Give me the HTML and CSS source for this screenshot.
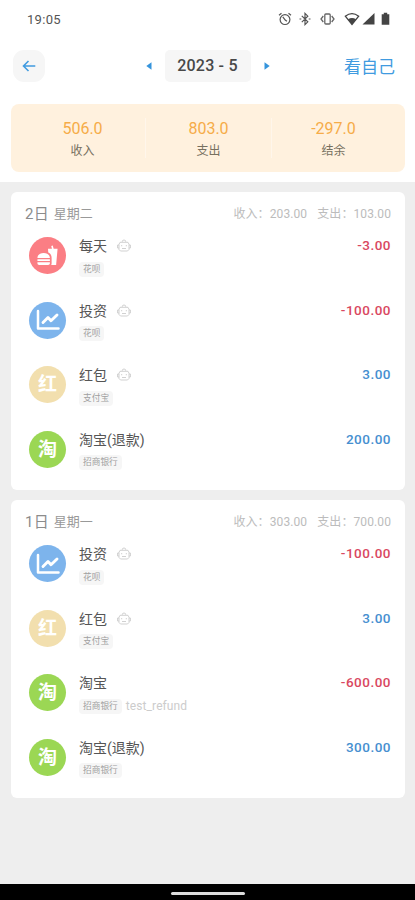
FILE: index.html
```html
<!DOCTYPE html>
<html lang="zh-CN">
<head>
<meta charset="utf-8">
<title>2023 - 5</title>
<link rel="stylesheet" href="styles.css">
</head>
<body>
<svg class="defs" width="0" height="0">
  <symbol id="bot" viewBox="0 0 14 14"><g fill="none" stroke="currentColor" stroke-width=".9"><path d="M5.200 2.800a1.800 1.800 0 0 1 3.600 0M3 3.300h8l1 2v5.200L10.500 12h-7L2 10.500V5.300zM2 6H.6v3H2M12 6h1.400v3H12M5 9.500h4"/><path d="M4.700 6v1.300M9.300 6v1.300"/></g></symbol>
  <symbol id="chart" viewBox="0 0 24 24"><g fill="none" stroke="currentColor" stroke-width="2.500" stroke-linecap="round" stroke-linejoin="round"><path d="M2 3v17.500h20.500"/><path d="M7 14.500l5-5 3 3.200 6-5.700" stroke-width="2.900"/></g></symbol>
  <symbol id="food" viewBox="0 0 24 24"><g fill="currentColor"><path d="M1.500 14.500c0-3.200 3-5 6.500-5s6.500 1.800 6.500 5zM1.500 15.800h13v1.900h-13zM1.500 19h13v1.200c0 1-.8 1.800-1.800 1.800h-9.400c-1 0-1.800-.8-1.800-1.800zM12.500 5h4.100l-.7-3 1.600-.5.9 3.500h4.100l-1.500 17h-5.200c.4-.5.500-1.200.5-2v-5.500c0-3-1.500-4.800-3.500-5.600z"/></g></symbol>
</svg>
<header class="top">
  <div class="status">
    <span class="clock">19:05</span>
    <div class="status-icons">
      <svg width="14" height="14" viewBox="0 0 14 14" fill="none" stroke="#555" stroke-width="1.200"><circle cx="7" cy="7.600" r="4.900"/><path d="M1 3.300l2.500-2M13 3.300l-2.500-2M4.800 4.800l2.400 3.200 1.700 1.300"/></svg>
      <svg class="bt" width="12" height="14" viewBox="0 0 12 14" fill="none" stroke="#555" stroke-width="1.200"><path d="M2.800 3.800l6 6L6 12.600V1.400l2.800 2.800-6 6M.5 7h1.800M9.700 7h1.800"/></svg>
      <svg class="vib" width="15" height="14" viewBox="0 0 15 14" fill="none" stroke="#666" stroke-width="1.300"><rect x="4.800" y="2" width="5.400" height="10" rx="1"/><path d="M3.300 4L1 7l2.300 3M11.700 4L14 7l-2.300 3"/></svg>
      <svg class="wifi" width="16" height="14" viewBox="0 0 16 14"><path d="M1.300 4.200Q8-1 14.700 4.200L8 12.500z" fill="none" stroke="#444" stroke-width="1.300"/><path d="M4 7.200q4-2.600 8 0L8 12.500z" fill="#444"/></svg>
      <svg class="signal" width="13" height="14" viewBox="0 0 13 14"><path d="M12.500 1v11.500H.5z" fill="#444"/></svg>
      <svg class="battery" width="9" height="14" viewBox="0 0 9 14"><path d="M2.800.8h3.400v1.500h2.100v10.500H.7V2.300h2.100z" fill="#444"/></svg>
    </div>
  </div>
  <nav class="nav">
    <span class="back"><svg width="14" height="12" viewBox="0 0 14 12" fill="none" stroke="#409be0" stroke-width="1.600"><path d="M6.500 1L1.500 6l5 5M1.500 6h11.800"/></svg></span>
    <div class="month">
      <svg width="6" height="8" viewBox="0 0 6 8"><path d="M5.500.3v7.400L.3 4z" fill="#3594dc"/></svg>
      <span class="month-label">2023 - 5</span>
      <svg width="6" height="8" viewBox="0 0 6 8"><path d="M.5.3v7.400L5.700 4z" fill="#3594dc"/></svg>
    </div>
    <span class="self">看自己</span>
  </nav>
  <section class="summary">
    <div class="stat"><b>506.0</b><span>收入</span></div>
    <div class="stat"><b>803.0</b><span>支出</span></div>
    <div class="stat"><b>-297.0</b><span>结余</span></div>
  </section>
</header>
<main class="list">
  <section class="card">
    <div class="day"><span class="date">2日</span><span class="week">星期二</span><span class="totals"><span>收入：203.00</span><span>支出：103.00</span></span></div>
    <div class="row"><span class="icon red"><svg width="23" height="23"><use href="#food"/></svg></span><div class="info"><div class="title">每天<svg width="14" height="14"><use href="#bot"/></svg></div><div class="meta"><span class="tag">花呗</span></div></div><span class="amount out">-3.00</span></div>
    <div class="row"><span class="icon blue"><svg width="24" height="24"><use href="#chart"/></svg></span><div class="info"><div class="title">投资<svg width="14" height="14"><use href="#bot"/></svg></div><div class="meta"><span class="tag">花呗</span></div></div><span class="amount out">-100.00</span></div>
    <div class="row"><span class="icon sand">红</span><div class="info"><div class="title">红包<svg width="14" height="14"><use href="#bot"/></svg></div><div class="meta"><span class="tag">支付宝</span></div></div><span class="amount in">3.00</span></div>
    <div class="row"><span class="icon green">淘</span><div class="info"><div class="title">淘宝(退款)</div><div class="meta"><span class="tag">招商银行</span></div></div><span class="amount in">200.00</span></div>
  </section>
  <section class="card">
    <div class="day"><span class="date">1日</span><span class="week">星期一</span><span class="totals"><span>收入：303.00</span><span>支出：700.00</span></span></div>
    <div class="row"><span class="icon blue"><svg width="24" height="24"><use href="#chart"/></svg></span><div class="info"><div class="title">投资<svg width="14" height="14"><use href="#bot"/></svg></div><div class="meta"><span class="tag">花呗</span></div></div><span class="amount out">-100.00</span></div>
    <div class="row"><span class="icon sand">红</span><div class="info"><div class="title">红包<svg width="14" height="14"><use href="#bot"/></svg></div><div class="meta"><span class="tag">支付宝</span></div></div><span class="amount in">3.00</span></div>
    <div class="row"><span class="icon green">淘</span><div class="info"><div class="title">淘宝</div><div class="meta"><span class="tag">招商银行</span><span class="note">test_refund</span></div></div><span class="amount out">-600.00</span></div>
    <div class="row"><span class="icon green">淘</span><div class="info"><div class="title">淘宝(退款)</div><div class="meta"><span class="tag">招商银行</span></div></div><span class="amount in">300.00</span></div>
  </section>
</main>
<footer class="gesture"><span></span></footer>
</body>
</html>
```
FILE: styles.css
```css
* { box-sizing: border-box; }
body {
  margin: 0;
  width: 415px;
  height: 900px;
  overflow: hidden;
  display: flex;
  flex-direction: column;
  background: #eee;
  font-family: Roboto, "Noto Sans CJK SC", sans-serif;
  color: #555;
}
svg { display: block; flex: none; }
.defs { position: absolute; }
.top { height: 182px; background: #fff; flex: none; }
.status {
  height: 38px;
  padding: 0 25px 0 27px;
  display: flex;
  align-items: center;
  justify-content: space-between;
}
.clock { font-size: 13px; letter-spacing: .3px; color: #555; }
.status-icons { display: flex; align-items: center; }
.bt { margin-left: 7px; }
.vib { margin-left: 9px; }
.wifi { margin-left: 9px; }
.signal { margin-left: 2px; }
.battery { margin-left: 6px; }
.nav {
  height: 56px;
  padding: 0 20px 0 13px;
  display: grid;
  grid-template-columns: 60px 1fr 60px;
  align-items: center;
}
.back {
  width: 32px;
  height: 32px;
  border-radius: 11px;
  background: #f6f6f6;
  display: flex;
  align-items: center;
  justify-content: center;
}
.month { display: flex; align-items: center; justify-content: center; gap: 13px; padding-left: 7px; }
.month-label {
  width: 86px;
  height: 32px;
  border-radius: 5px;
  background: #f6f6f6;
  font-size: 16px;
  font-weight: 500;
  line-height: 32px;
  text-align: center;
  color: #484848;
  letter-spacing: .2px;
}
.self { font-size: 17px; line-height: 24px; padding-top: 2px; color: #409be0; text-align: right; white-space: nowrap; }
.summary {
  margin: 10px 10px 0 11px;
  height: 68px;
  border-radius: 8px;
  background: #fff1de;
  display: grid;
  grid-template-columns: 134px 126px 1fr;
  align-items: center;
}
.stat { display: flex; flex-direction: column; align-items: center; height: 40px; }
.stat:first-child { padding-left: 9px; }
.stat:last-child { padding-right: 10px; }
.stat + .stat { border-left: 1px solid #fff6eb; }
.stat b { font-size: 16px; line-height: 20px; padding-top: 1px; font-weight: 400; color: #f6ac48; }
.stat span { font-size: 12px; line-height: 18px; margin-top: 3px; color: #77705f; }
.list { flex: 1; padding: 10px 10px 0 11px; }
.card { height: 298px; border-radius: 6px; background: #fff; margin-bottom: 10px; padding: 0 14px; }
.day { height: 40px; display: flex; align-items: center; color: #999; }
.date { font-size: 15px; letter-spacing: .2px; color: #8c8c8c; }
.week { font-size: 13px; margin-left: 5px; }
.totals { margin-left: auto; display: flex; gap: 10px; font-size: 12px; letter-spacing: .1px; color: #bcbcbc; }
.row { height: 64.600px; display: flex; align-items: flex-start; padding: 5px 0 0 4px; }
.icon {
  width: 37px;
  height: 37px;
  border-radius: 50%;
  color: #fff;
  font-size: 19px;
  font-weight: 700;
  line-height: 37px;
  display: flex;
  align-items: center;
  justify-content: center;
}
.red { background: #fb7e84; }
.blue { background: #7db4ec; }
.sand { background: #f2dfae; }
.green { background: #9bd754; }
.info { margin-left: 13px; }
.title { display: flex; align-items: center; gap: 10px; height: 18px; font-size: 14px; line-height: 18px; color: #555; }
.title svg { color: #ccc; }
.meta { display: flex; align-items: center; margin-top: 6px; height: 16px; }
.tag { padding: 0 4px; height: 15px; line-height: 15px; border-radius: 4px; background: #f6f6f6; font-size: 8.700px; color: #a0a0a0; }
.note { margin-left: 4px; font-size: 12px; line-height: 16px; letter-spacing: .1px; color: #ccc; }
.amount { margin-left: auto; font-size: 13.500px; line-height: 17px; letter-spacing: .5px; font-weight: 500; }
.out { color: #d94861; }
.in { color: #468fd0; }
.gesture { height: 16px; flex: none; background: #000; display: flex; justify-content: center; align-items: center; }
.gesture span { width: 74px; height: 3px; border-radius: 2px; background: #ddd; margin-top: 2px; }
```
